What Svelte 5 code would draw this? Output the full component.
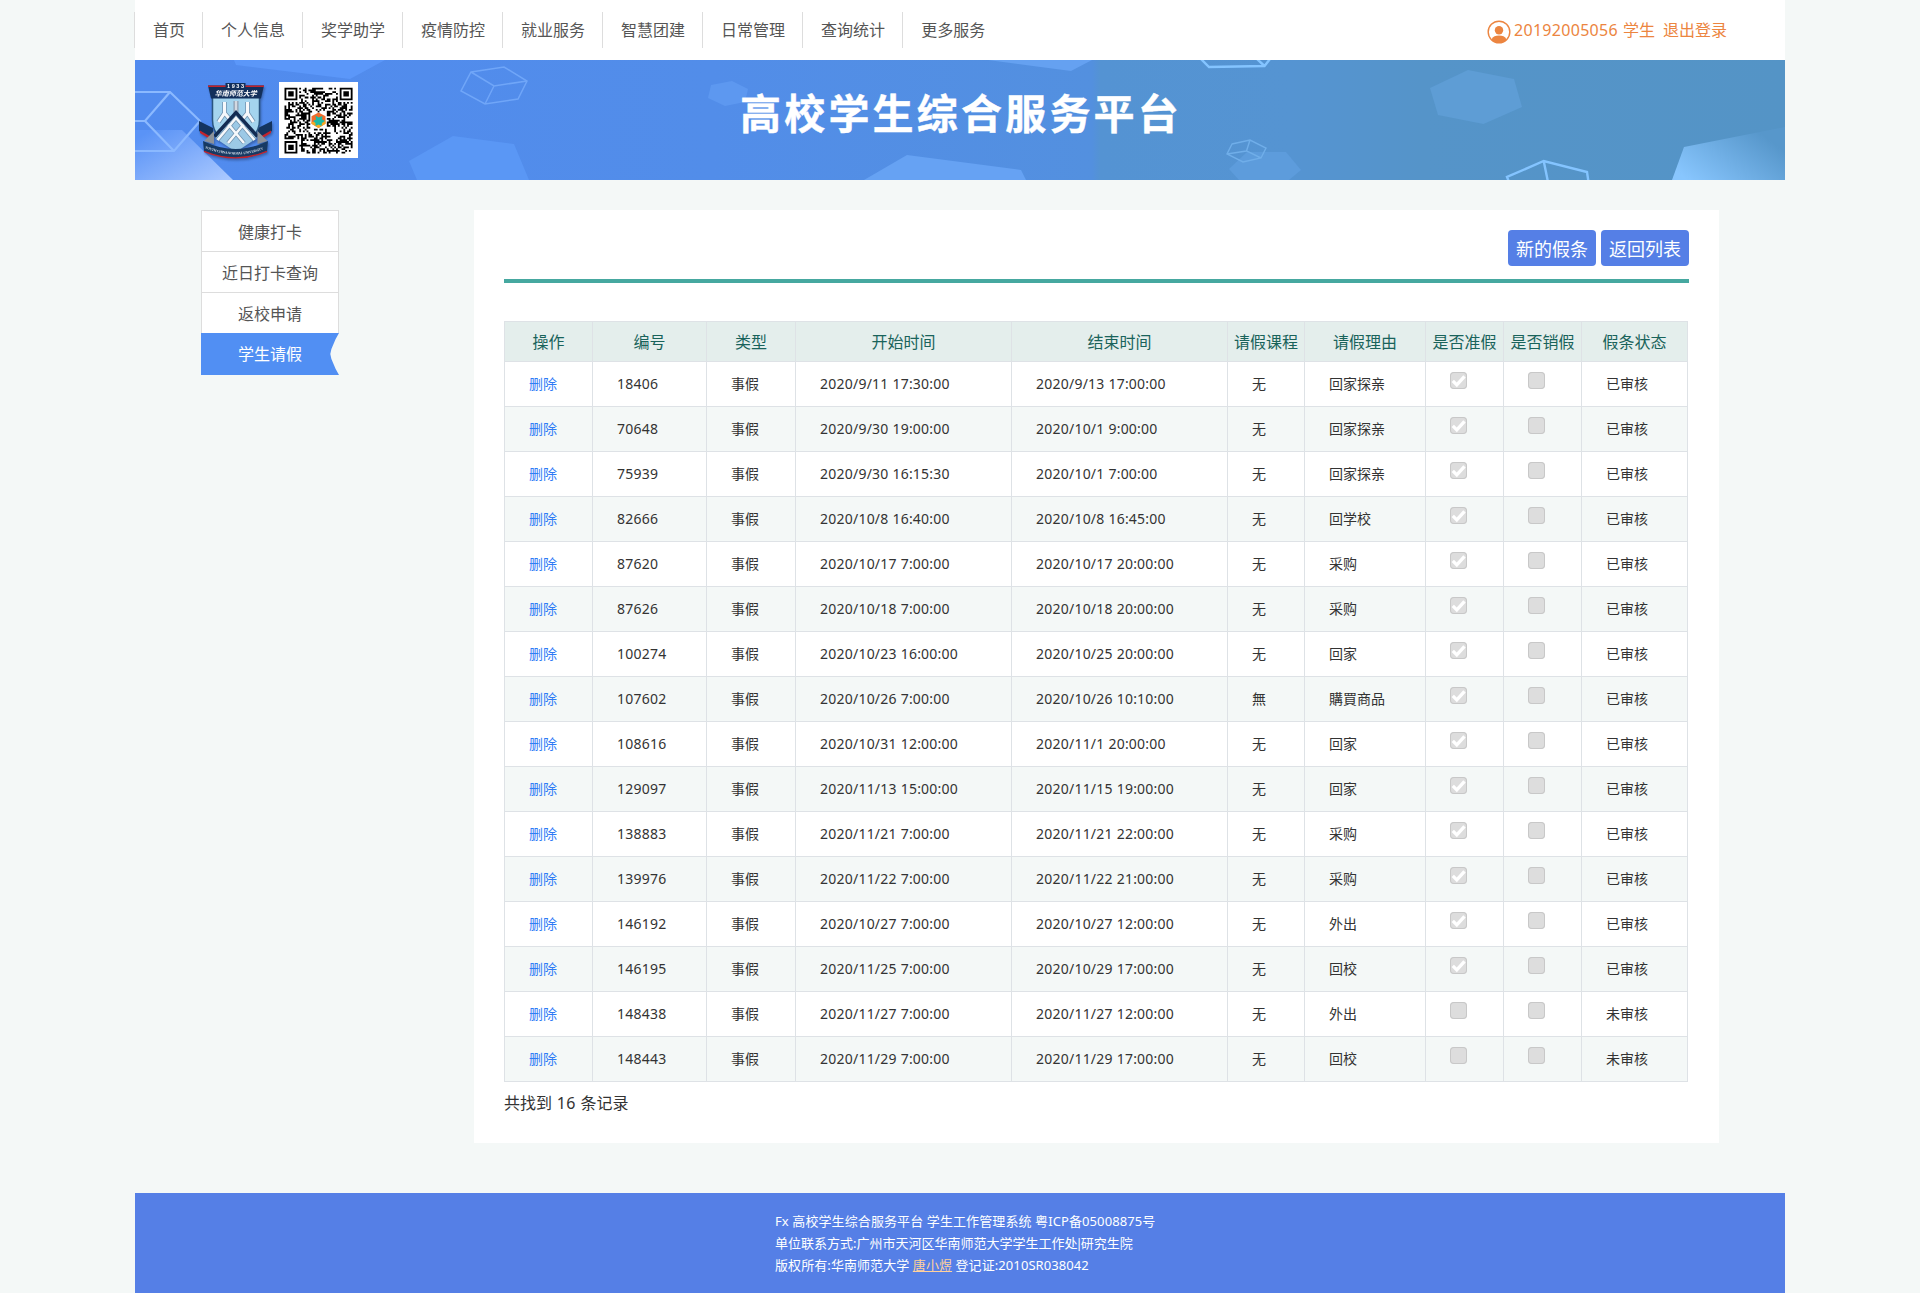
<script>
  const menu = ['首页', '个人信息', '奖学助学', '疫情防控', '就业服务', '智慧团建', '日常管理', '查询统计', '更多服务'];
  const side = ['健康打卡', '近日打卡查询', '返校申请', '学生请假'];
  const heads = ['操作', '编号', '类型', '开始时间', '结束时间', '请假课程', '请假理由', '是否准假', '是否销假', '假条状态'];

  const rows = [
    ['18406', '2020/9/11 17:30:00', '2020/9/13 17:00:00', '无', '回家探亲', true],
    ['70648', '2020/9/30 19:00:00', '2020/10/1 9:00:00', '无', '回家探亲', true],
    ['75939', '2020/9/30 16:15:30', '2020/10/1 7:00:00', '无', '回家探亲', true],
    ['82666', '2020/10/8 16:40:00', '2020/10/8 16:45:00', '无', '回学校', true],
    ['87620', '2020/10/17 7:00:00', '2020/10/17 20:00:00', '无', '采购', true],
    ['87626', '2020/10/18 7:00:00', '2020/10/18 20:00:00', '无', '采购', true],
    ['100274', '2020/10/23 16:00:00', '2020/10/25 20:00:00', '无', '回家', true],
    ['107602', '2020/10/26 7:00:00', '2020/10/26 10:10:00', '無', '購買商品', true],
    ['108616', '2020/10/31 12:00:00', '2020/11/1 20:00:00', '无', '回家', true],
    ['129097', '2020/11/13 15:00:00', '2020/11/15 19:00:00', '无', '回家', true],
    ['138883', '2020/11/21 7:00:00', '2020/11/21 22:00:00', '无', '采购', true],
    ['139976', '2020/11/22 7:00:00', '2020/11/22 21:00:00', '无', '采购', true],
    ['146192', '2020/10/27 7:00:00', '2020/10/27 12:00:00', '无', '外出', true],
    ['146195', '2020/11/25 7:00:00', '2020/10/29 17:00:00', '无', '回校', true],
    ['148438', '2020/11/27 7:00:00', '2020/11/27 12:00:00', '无', '外出', false],
    ['148443', '2020/11/29 7:00:00', '2020/11/29 17:00:00', '无', '回校', false]
  ];

  // QR pattern: three finder squares, the rest filled by a small seeded generator
  const N = 37;
  const finder = (x, y) => {
    const d = Math.max(Math.abs(x - 3), Math.abs(y - 3));
    return d > 3 ? false : d !== 2;
  };
  let seed = 77;
  let qr = '';
  for (let y = 0; y < N; y++) {
    for (let x = 0; x < N; x++) {
      seed = (seed * 1103515245 + 12345) % 2147483648;
      let on = seed / 2147483648 < 0.5;
      if (x < 8 && y < 8) on = finder(x, y);
      else if (x > N - 9 && y < 8) on = finder(N - 1 - x, y);
      else if (x < 8 && y > N - 9) on = finder(x, N - 1 - y);
      else if (Math.abs(x - 18) < 5 && Math.abs(y - 18) < 5) on = false;
      if (on) qr += `M${x} ${y}h1v1h-1z`;
    }
  }
</script>

<div class="page">
  <header class="top">
    <nav>
      {#each menu as m}<a>{m}</a>{/each}
    </nav>
    <div class="user">
      <svg width="24" height="24" viewBox="0 0 24 24">
        <circle cx="12" cy="12" r="10.8" fill="none" stroke="#ec8540" stroke-width="1.4" />
        <circle cx="12" cy="10.2" r="4.2" fill="#ec8540" />
        <path d="M4.4 19.4C6 16.4 8.5 15.6 12 15.6s6 .8 7.6 3.8A10.8 10.8 0 0 1 12 22.8a10.8 10.8 0 0 1-7.6-3.4z" fill="#ec8540" />
      </svg>
      <span class="uid">20192005056</span><span class="role">学生</span><a>退出登录</a>
    </div>
  </header>

  <div class="banner">
    <svg class="art" viewBox="135 60 1650 120" width="1650" height="120">
      <defs>
        <linearGradient id="gl" gradientUnits="userSpaceOnUse" x1="160" y1="125" x2="200" y2="195">
          <stop offset="0" stop-color="#5a93f6" /><stop offset="1" stop-color="#a9c8ff" />
        </linearGradient>
        <linearGradient id="gr" gradientUnits="userSpaceOnUse" x1="1700" y1="190" x2="1750" y2="125">
          <stop offset="0" stop-color="#88c6fe" /><stop offset="1" stop-color="#5797cb" />
        </linearGradient>
      </defs>
      <path d="M234 60L236 65 350 79 385 60z" fill="#5b97f9" />
      <path d="M135 130H182L233 180H135z" fill="url(#gl)" />
      <path d="M135 92H170L200 121 174 151H135M135 121H145L170 92M145 121L174 151" fill="none" stroke="#8bb9ff" stroke-width="2.2" />
      <path d="M471 72L504 67 527 81 518 99 485 104 461 91zM471 72L494 86 527 81M494 86L485 104" fill="none" stroke="#70a6f8" stroke-width="1.5" />
      <path d="M409 161L453 136 514 144 529 180H417z" fill="#5a97f5" />
      <path d="M711 85L732 81 748 89 745 102 725 106 708 98z" fill="#5d98f0" />
      <path d="M864 180L907 155 1021 170 1026 180z" fill="#66a2f3" />
      <path d="M988 60L1071 71 1092 60z" fill="#65a1f1" />
      <path d="M1201 59L1209 67 1264.500 66 1270 59M1257 59L1264.500 66" fill="none" stroke="#84c4ff" stroke-width="2.400" />
      <path d="M1229 169L1247 152 1286 152 1301 170 1289 180H1239z" fill="#5d9cdc" />
      <path d="M1232 144L1250 140 1266 148 1261 158 1243 162 1227 154zM1250 140L1246.500 151 1261 158M1246.500 151L1227 154" fill="none" stroke="#70aee9" stroke-width="1.400" />
      <path d="M1430 88L1468 70 1514 79 1522 107 1483.500 124 1438 115z" fill="#5e9dd5" />
      <path d="M1509 182L1507 177 1543.700 161 1587 172 1588.500 182M1543.700 161L1548 182" fill="none" stroke="#84c4ff" stroke-width="2.400" />
      <path d="M1672 180L1684 147 1785 127V180z" fill="url(#gr)" />
    </svg>

    <svg class="crest" viewBox="198 80 76 82" width="76" height="82">
      <path d="M199 121l14 7v11l-14-8zM272 121l-14 7v11l14-8z" fill="#14345f" />
      <path d="M200 130.500l13 7.500v3l-13-8zM271 130.500l-13 7.500v3l13-8z" fill="#c3232c" />
      <path d="M212.500 96h47v24c0 14-10 22-23.500 29-13.500-7-23.500-15-23.500-29z" fill="#a4d4ee" stroke="#2a5580" stroke-width="1.500" />
      <path d="M224.500 102v11l-6 9M224.500 113l5 6M247.500 102v11l6 9M247.500 113l-5 6" fill="none" stroke="#7395b2" stroke-width="4.600" />
      <path d="M224.500 102v11l-6 9M224.500 113l5 6M247.500 102v11l6 9M247.500 113l-5 6" fill="none" stroke="#f6f8fb" stroke-width="3" />
      <path d="M236 101v12" stroke="#8d9db0" stroke-width="5" />
      <path d="M236 101v12" stroke="#d3d9e2" stroke-width="2.500" />
      <path d="M215 138l21-26 21 26-21 14z" fill="#9cc9e6" />
      <path d="M217.500 140L236 118l18.500 22M228.500 124.500L244 143M243.500 124.500L228 143" fill="none" stroke="#6f91ad" stroke-width="4" />
      <path d="M217.500 140L236 118l18.500 22M228.500 124.500L244 143M243.500 124.500L228 143" fill="none" stroke="#f6f8fb" stroke-width="2.600" />
      <path d="M214.500 136.500L236 112.500l21.500 24" fill="none" stroke="#132b52" stroke-width="3.400" />
      <path d="M225.500 83h20v2.500h18.500l-3 13h-50l-3-13h17.500z" fill="#122f5b" />
      <path d="M208 86.200h17.500M245.500 86.200h18.500" stroke="#c3232c" stroke-width="1.600" />
      <path d="M214 131v13l-10-3zM257.500 131v13l10-3z" fill="#8c929a" />
      <path d="M203 141q33 16 65 0l-1 10q-31 14-63 0z" fill="#173a63" />
      <path d="M204 151.300q32 13 63 0" fill="none" stroke="#c3232c" stroke-width="1.300" />
      <path id="ribbon" d="M205 148q31 13 62 0" fill="none" />
      <text class="year" x="235.500" y="87.600" text-anchor="middle" textLength="17">1933</text>
      <text class="school" x="235.800" y="96.400" text-anchor="middle" textLength="42">华南师范大学</text>
      <text class="latin"><textPath href="#ribbon" textLength="60">SOUTH CHINA NORMAL UNIVERSITY</textPath></text>
    </svg>

    <svg class="qr" viewBox="0 0 79 76" width="79" height="76">
      <rect width="79" height="76" fill="#fff" />
      <g transform="translate(5.500 5.700) scale(1.840 1.780)"><path d={qr} fill="#000" /></g>
      <path d="M39.500 30.500l7 3.700v7.600L39.500 46 32.500 41.800v-7.600z" fill="#f26b2a" />
      <path d="M32.500 40v1.800l7 4.200 7-4.200v-3z" fill="#f7a823" />
      <path d="M36.500 33.500l3 2 4-1.500-.5 3.200 3 1.800-3 2-.5 3-3-1.500-3 1.500v-3l-2.500-2 3-1.500z" fill="#1fb9a4" />
    </svg>

    <h1>高校学生综合服务平台</h1>
  </div>

  <main>
    <aside>
      {#each side as s, i}
        <a class:active={i === 3}>{s}</a>
      {/each}
    </aside>

    <section>
      <div class="tools">
        <button>新的假条</button><button>返回列表</button>
      </div>
      <table>
        <colgroup>
          <col class="c1" /><col class="c2" /><col class="c3" /><col class="c4" /><col class="c4" />
          <col class="c6" /><col class="c7" /><col class="c8" /><col class="c8" /><col class="c10" />
        </colgroup>
        <thead>
          <tr>{#each heads as h}<th>{h}</th>{/each}</tr>
        </thead>
        <tbody>
          {#each rows as [id, start, end, course, reason, ok]}
            <tr>
              <td><a class="del">删除</a></td>
              <td class="num">{id}</td>
              <td>事假</td>
              <td class="num">{start}</td>
              <td class="num">{end}</td>
              <td>{course}</td>
              <td>{reason}</td>
              <td>
                <span class="box">
                  {#if ok}
                    <svg viewBox="0 0 17 17" width="17" height="17"><path d="M2.800 8.800l4 4L14.500 4.300" fill="none" stroke="#fff" stroke-width="3.300" /></svg>
                  {/if}
                </span>
              </td>
              <td><span class="box"></span></td>
              <td>{ok ? '已审核' : '未审核'}</td>
            </tr>
          {/each}
        </tbody>
      </table>
      <p class="count">共找到 <span>16</span> 条记录</p>
    </section>
  </main>

  <footer>
    <div>
      <p class="f1">Fx 高校学生综合服务平台 学生工作管理系统 粤ICP备05008875号</p>
      <p class="f2">单位联系方式:广州市天河区华南师范大学学生工作处<span>|</span>研究生院</p>
      <p class="f3">版权所有:华南师范大学 <a>唐小煜</a> 登记证:2010SR038042</p>
    </div>
  </footer>
</div>

<style>
  :global(body) {
    background: #f4f8f7;
    font-family: 'Noto Sans', 'Noto Sans CJK SC', sans-serif;
    color: #333;
  }
  .page {
    width: 1650px;
    height: 1293px;
    margin: 0 auto;
    display: flex;
    flex-direction: column;
  }
  .top {
    height: 60px;
    background: #fff;
    display: flex;
    align-items: center;
    justify-content: space-between;
    flex: none;
  }
  nav {
    display: flex;
    margin-left: -1px;
  }
  nav a {
    border-left: 1px solid #ddd;
    padding: 0 17px 0 18px;
    font-size: 16px;
    line-height: 36px;
    height: 36px;
    color: #555;
  }
  .user {
    display: flex;
    align-items: center;
    margin-right: 58px;
    color: #ec8540;
    font-size: 16px;
    line-height: 36px;
  }
  .user svg {
    margin: 3px 3px 0 0;
  }
  .uid {
    letter-spacing: 0.3px;
  }
  .role {
    margin: 0 8px 0 5px;
  }
  .banner {
    position: relative;
    height: 120px;
    flex: none;
    display: flex;
    align-items: flex-start;
    background: linear-gradient(90deg, #518bef 0, #528de9 35%, #5390df 58%, #5493d3 58.5%, #5594d2 70%, #5594c9 78%, #5494c6 100%);
  }
  .art {
    position: absolute;
    left: 0;
    top: 0;
  }
  .crest {
    position: relative;
    margin: 20px 0 0 63px;
    filter: drop-shadow(1px 2px 1px rgba(20, 40, 80, 0.4));
  }
  .year {
    font: bold 5.5px 'Liberation Sans', sans-serif;
    fill: #fff;
  }
  .school {
    font: italic bold 7px 'Noto Sans CJK SC', sans-serif;
    fill: #fff;
  }
  .latin {
    font: bold 3.6px 'Liberation Serif', serif;
    fill: #cfdbe8;
  }
  .qr {
    position: relative;
    margin: 22px 0 0 5px;
  }
  h1 {
    position: relative;
    margin: 23px 0 0 382px;
    font-size: 41px;
    line-height: 60px;
    letter-spacing: 3.2px;
    font-weight: 700;
    color: #fff;
    white-space: nowrap;
    -webkit-text-stroke: 0.4px #fff;
  }
  main {
    display: flex;
    align-items: flex-start;
    padding: 30px 66px 0;
    height: 983px;
  }
  aside {
    width: 138px;
    display: flex;
    flex-direction: column;
  }
  aside a {
    height: 40px;
    line-height: 42px;
    border: 1px solid #ddd;
    border-bottom: 0;
    background: #fff;
    text-align: center;
    font-size: 16px;
    color: #555;
  }
  aside a.active {
    height: 42px;
    line-height: 42px;
    border: 0;
    box-sizing: border-box;
    background: #518ff3;
    color: #fff;
    clip-path: polygon(0 0, 100% 0, 97.5% 15%, 94.5% 38%, 93.7% 50%, 94.5% 62%, 97.5% 85%, 100% 100%, 0 100%);
  }
  section {
    width: 1245px;
    height: 933px;
    box-sizing: border-box;
    margin-left: auto;
    background: #fff;
    padding: 20px 30px 0;
  }
  .tools {
    height: 49px;
    border-bottom: 4px solid #46a8a0;
    display: flex;
    justify-content: flex-end;
    align-items: flex-start;
    gap: 5px;
    margin-bottom: 38px;
  }
  button {
    width: 88px;
    height: 36px;
    border: 0;
    border-radius: 4px;
    padding: 0;
    background: #557fe6;
    color: #fff;
    font-family: inherit;
    font-size: 18px;
  }
  table {
    table-layout: fixed;
    width: 1184px;
    border-collapse: separate;
    border-spacing: 0;
    border: 0 solid #dee2e6;
    border-width: 1px 0 0 1px;
    box-sizing: border-box;
  }
  .c1 { width: 88px; }
  .c2 { width: 114px; }
  .c3 { width: 89px; }
  .c4 { width: 216px; }
  .c6 { width: 77px; }
  .c7 { width: 121px; }
  .c8 { width: 78px; }
  .c10 { width: 106px; }
  th,
  td {
    box-sizing: border-box;
    border: 0 solid #dee2e6;
    border-width: 0 1px 1px 0;
    white-space: nowrap;
  }
  th {
    height: 40px;
    padding: 0;
    background: #e4eeec;
    color: #19635b;
    font-size: 16px;
    line-height: 24px;
    font-weight: 400;
  }
  td {
    height: 45px;
    padding: 0 0 0 24px;
    font-size: 14px;
    line-height: 22px;
  }
  .num {
    letter-spacing: 0.23px;
  }
  tbody tr:nth-child(even) {
    background: #f4f8f7;
  }
  .del {
    color: #2f7cf6;
  }
  .box {
    display: block;
    width: 17px;
    height: 17px;
    box-sizing: border-box;
    margin-bottom: 8px;
    border-radius: 4px;
    background: #ddd;
    box-shadow: inset 0 0 0 1px #c8c8c8;
  }
  .box svg {
    display: block;
  }
  .count {
    margin: 9px 0 0;
    font-size: 16px;
    line-height: 24px;
  }
  .count span {
    letter-spacing: 0.3px;
    margin: 0 0.6px;
  }
  footer {
    height: 100px;
    flex: none;
    background: #557fe6;
    color: #fff;
    font-size: 13px;
    line-height: 22px;
    display: flex;
    padding: 17px 0 0 640px;
    box-sizing: border-box;
    white-space: nowrap;
  }
  footer p {
    margin: 0;
  }
  .f1 {
    letter-spacing: 0.1px;
  }
  .f2 span {
    margin: 0 -2px;
  }
  .f3 {
    letter-spacing: 0.08px;
  }
  footer a {
    color: #ffd19c;
    text-decoration: underline;
  }
</style>
